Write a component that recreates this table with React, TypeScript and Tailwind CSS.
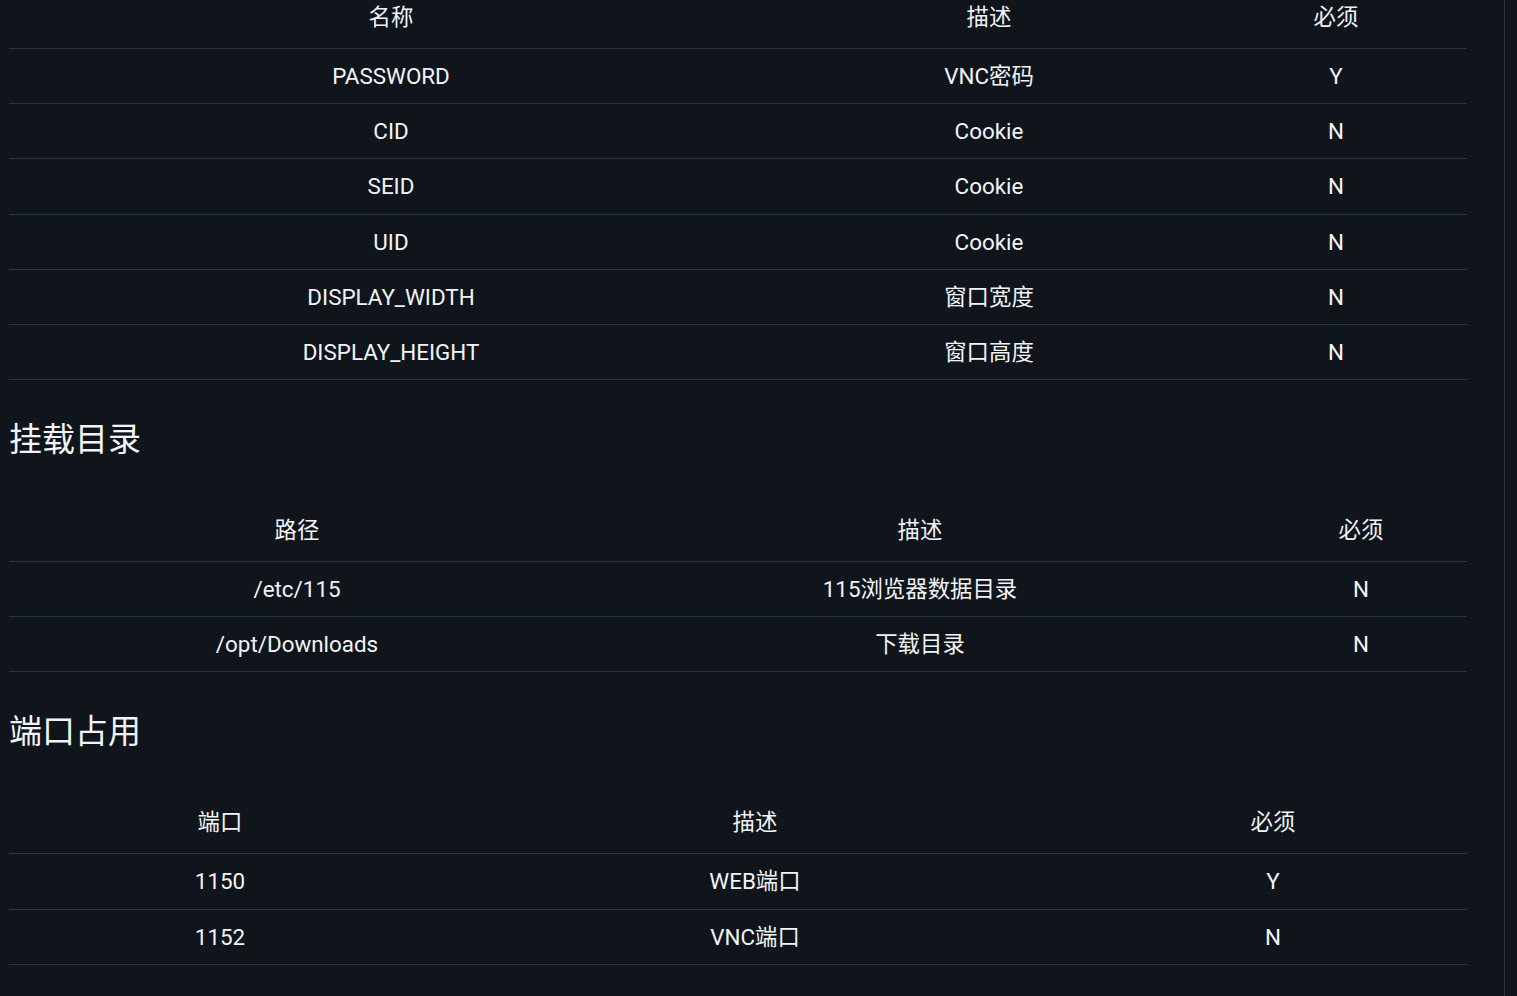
const font = { fontFamily: '"Roboto", "Noto Sans CJK SC", sans-serif' };

type Table = {
  title?: string;
  cols: [string, number][];
  rows: string[][];
};

const tables: Table[] = [
  {
    cols: [
      ["名称", 764],
      ["描述", 432],
      ["必须", 262],
    ],
    rows: [
      ["PASSWORD", "VNC密码", "Y"],
      ["CID", "Cookie", "N"],
      ["SEID", "Cookie", "N"],
      ["UID", "Cookie", "N"],
      ["DISPLAY_WIDTH", "窗口宽度", "N"],
      ["DISPLAY_HEIGHT", "窗口高度", "N"],
    ],
  },
  {
    title: "挂载目录",
    cols: [
      ["路径", 576],
      ["描述", 670],
      ["必须", 212],
    ],
    rows: [
      ["/etc/115", "115浏览器数据目录", "N"],
      ["/opt/Downloads", "下载目录", "N"],
    ],
  },
  {
    title: "端口占用",
    cols: [
      ["端口", 422],
      ["描述", 648],
      ["必须", 388],
    ],
    rows: [
      ["1150", "WEB端口", "Y"],
      ["1152", "VNC端口", "N"],
    ],
  },
];

function DocTable({ table }: { table: Table }) {
  return (
    <table className="w-[1458px] table-fixed border-collapse">
      <colgroup>
        {table.cols.map(([name, width]) => (
          <col key={name} style={{ width }} />
        ))}
      </colgroup>
      <thead>
        <tr className="border-b border-[#2a3642]">
          {table.cols.map(([name]) => (
            <th key={name} className="pt-[13px] pb-[16px] text-[22.4px] leading-[30px] font-normal text-center">
              {name}
            </th>
          ))}
        </tr>
      </thead>
      <tbody>
        {table.rows.map((row, i) => (
          <tr key={i} className="border-b border-[#2a3642]">
            {row.map((cell, j) => (
              <td key={j} className="py-[12px] text-[22.4px] leading-[30.17px] text-center">
                {cell}
              </td>
            ))}
          </tr>
        ))}
      </tbody>
    </table>
  );
}

export default function App() {
  return (
    <div className="flex h-[996px] overflow-hidden bg-[#10151c] text-[#f1f4f7]" style={font}>
      <main className="w-[1504px] shrink-0 pl-[9px] -mt-[11px]">
        {tables.map((table, i) => (
          <section key={i}>
            {table.title && (
              <h2 className="mt-[40px] mb-[42px] text-[33px] leading-[40px] font-normal">{table.title}</h2>
            )}
            <DocTable table={table} />
          </section>
        ))}
      </main>
      <aside className="flex-1 border-l border-[#2a313a] bg-[#10151c]" />
    </div>
  );
}
